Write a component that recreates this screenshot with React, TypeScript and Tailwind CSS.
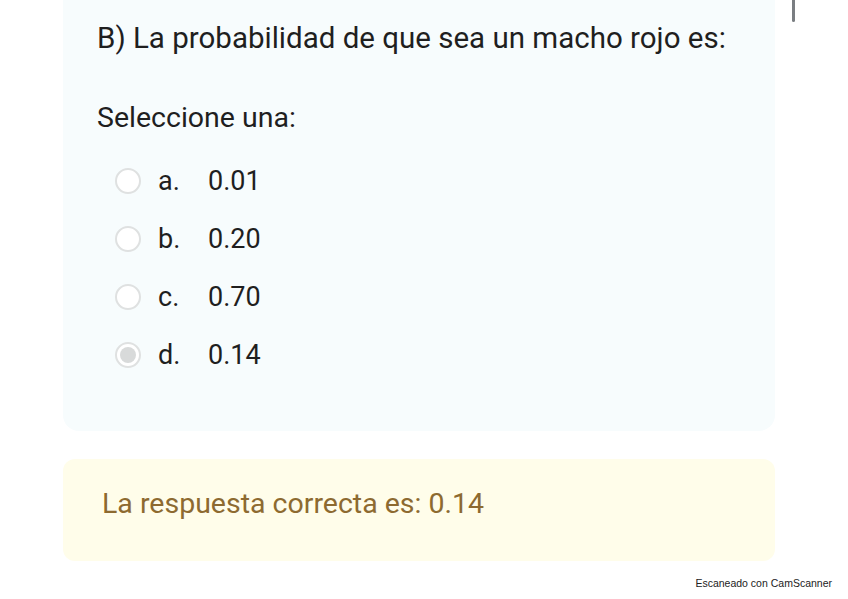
import React from 'react';

const options = [
    { letter: 'a.', value: '0.01', checked: false },
    { letter: 'b.', value: '0.20', checked: false },
    { letter: 'c.', value: '0.70', checked: false },
    { letter: 'd.', value: '0.14', checked: true },
];

const Radio: React.FC<{ checked: boolean }> = ({ checked }) => (
    <div className="w-[26px] h-[26px] rounded-full border-2 border-[#dfe1e1] bg-white flex items-center justify-center">
        {checked && <div className="w-[16px] h-[16px] rounded-full bg-[#d8dada]" />}
    </div>
);

export default function App() {
    return (
        <div className="relative w-[848px] h-[599px] bg-white overflow-hidden font-['Roboto',sans-serif] text-[#1f1f1f]">
            {/* scrollbar thumb */}
            <div className="absolute left-[792px] top-0 w-[3px] h-[22px] bg-[#7a7e82] rounded-b" />

            <div className="ml-[63px] w-[712px] bg-[#f7fcfd] rounded-b-2xl pl-[34px] pt-[20px] pb-[60px]">
                <h2 className="text-[29.5px] leading-[36px]">B) La probabilidad de que sea un macho rojo es:</h2>
                <p className="mt-[45px] text-[28.5px] leading-[34px]">Seleccione una:</p>
                <div className="mt-[30px] flex flex-col gap-[26px] pl-[18px]">
                    {options.map((o) => (
                        <div key={o.letter} className="flex items-center h-[32px]">
                            <Radio checked={o.checked} />
                            <span className="ml-[17px] w-[50px] text-[27px]">{o.letter}</span>
                            <span className="text-[27px]">{o.value}</span>
                        </div>
                    ))}
                </div>
            </div>

            <div className="ml-[63px] mt-[28px] w-[712px] h-[102px] bg-[#fffdea] rounded-xl flex items-center pl-[39px] pb-[12px]">
                <span className="text-[28.5px] text-[#8d6a30]">La respuesta correcta es: 0.14</span>
            </div>

            <div className="flex justify-end pr-[16px] mt-[15px]">
                <span className="text-[10.5px] text-[#222] font-['Liberation_Sans',sans-serif]">Escaneado con CamScanner</span>
            </div>
        </div>
    );
}
